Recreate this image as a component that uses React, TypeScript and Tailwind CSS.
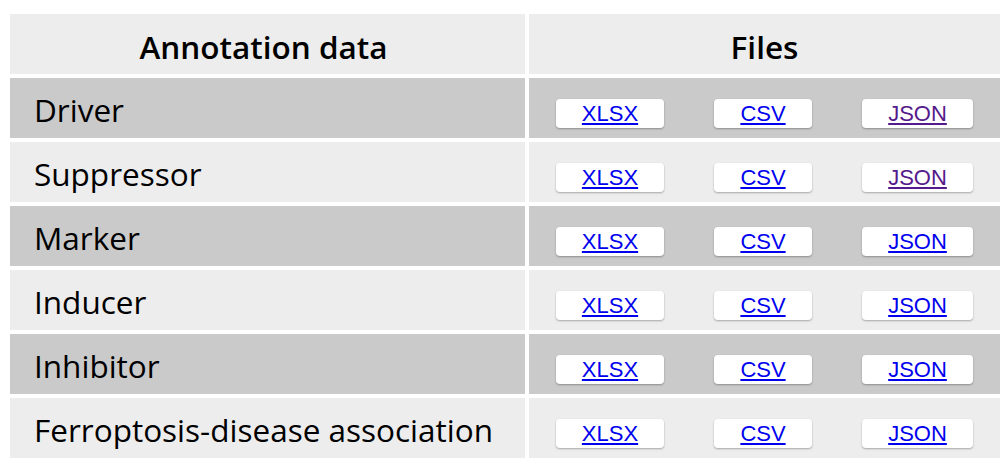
import React from "react";

interface Row {
  label: string;
  visitedJson?: boolean;
}

const rows: Row[] = [
  { label: "Driver", visitedJson: true },
  { label: "Suppressor", visitedJson: true },
  { label: "Marker" },
  { label: "Inducer" },
  { label: "Inhibitor" },
  { label: "Ferroptosis-disease association" },
];

const FileButton: React.FC<{ text: string; width: string; visited?: boolean }> = ({
  text,
  width,
  visited,
}) => (
  <a
    href="#"
    className={`${width} h-[29px] flex items-center justify-center bg-white rounded-[4px] shadow-[0_1px_2px_rgba(0,0,0,0.3)] underline text-[22px] font-['Liberation_Sans',Arial,sans-serif] ${
      visited ? "text-[#551a8b]" : "text-[#0000ee]"
    }`}
  >
    {text}
  </a>
);

export default function App() {
  return (
    <div className="w-[1008px] h-[470px] bg-white pt-[14px] pl-[10px] font-['Open_Sans',sans-serif] text-black">
      <div className="grid grid-cols-[515px_471px] gap-[4px]">
        <div className="h-[60px] bg-[#ededed] flex items-center justify-center pt-[6px] pr-[8px] text-[31.5px] font-semibold">
          Annotation data
        </div>
        <div className="h-[60px] bg-[#ededed] flex items-center justify-center pt-[6px] text-[31.5px] font-semibold">
          Files
        </div>
        {rows.map((row, i) => {
          const bg = i % 2 === 0 ? "bg-[#cacaca]" : "bg-[#ededed]";
          return (
            <React.Fragment key={row.label}>
              <div className={`h-[60px] ${bg} flex items-center pl-[24px] pt-[4px] text-[31.5px]`}>
                {row.label}
              </div>
              <div className={`h-[60px] ${bg} flex items-center justify-around px-[2px] pt-[11px]`}>
                <FileButton text="XLSX" width="w-[108px]" />
                <FileButton text="CSV" width="w-[98px]" />
                <FileButton text="JSON" width="w-[111px]" visited={row.visitedJson} />
              </div>
            </React.Fragment>
          );
        })}
      </div>
    </div>
  );
}
